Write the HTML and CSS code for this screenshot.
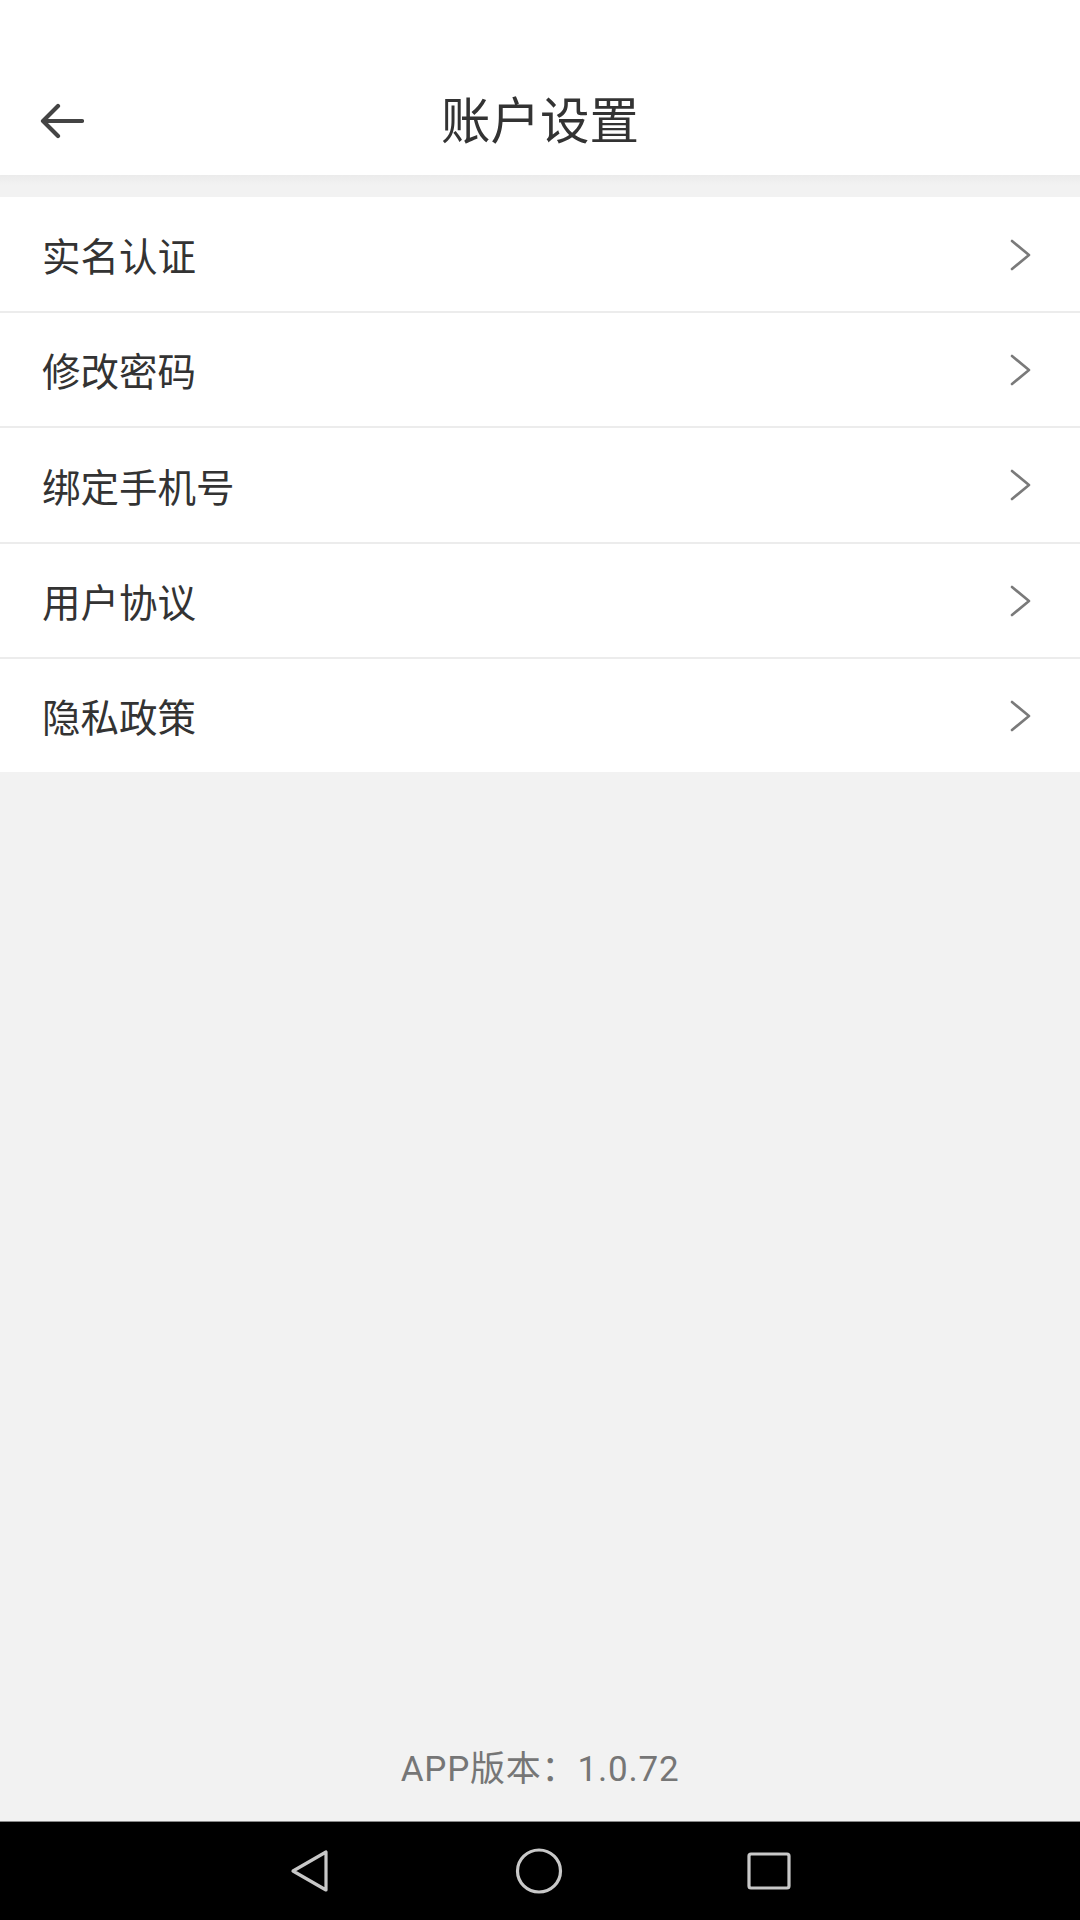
FILE: index.html
```html
<!DOCTYPE html>
<html lang="zh-CN">
<head>
<meta charset="utf-8">
<title>账户设置</title>
<link rel="stylesheet" href="styles.css">
</head>
<body>
<div class="screen">
  <header class="header">
    <div class="status"></div>
    <div class="toolbar">
      <span class="back">
        <svg width="44" height="36" viewBox="0 0 44 36"><path d="M42 18H4M18 3L3 18L18 33" fill="none" stroke="#444" stroke-width="4.2" stroke-linecap="round" stroke-linejoin="round"/></svg>
      </span>
      <h1 class="title">账户设置</h1>
    </div>
  </header>
  <main class="content">
    <ul class="list">
      <li class="row"><span class="label">实名认证</span><svg class="chev" width="22" height="32" viewBox="0 0 22 32"><path d="M2 2L19 16L2 30" fill="none" stroke="#7a7a7a" stroke-width="2.6" stroke-linecap="round" stroke-linejoin="round"/></svg></li>
      <li class="row"><span class="label">修改密码</span><svg class="chev" width="22" height="32" viewBox="0 0 22 32"><path d="M2 2L19 16L2 30" fill="none" stroke="#7a7a7a" stroke-width="2.6" stroke-linecap="round" stroke-linejoin="round"/></svg></li>
      <li class="row"><span class="label">绑定手机号</span><svg class="chev" width="22" height="32" viewBox="0 0 22 32"><path d="M2 2L19 16L2 30" fill="none" stroke="#7a7a7a" stroke-width="2.6" stroke-linecap="round" stroke-linejoin="round"/></svg></li>
      <li class="row"><span class="label">用户协议</span><svg class="chev" width="22" height="32" viewBox="0 0 22 32"><path d="M2 2L19 16L2 30" fill="none" stroke="#7a7a7a" stroke-width="2.6" stroke-linecap="round" stroke-linejoin="round"/></svg></li>
      <li class="row"><span class="label">隐私政策</span><svg class="chev" width="22" height="32" viewBox="0 0 22 32"><path d="M2 2L19 16L2 30" fill="none" stroke="#7a7a7a" stroke-width="2.6" stroke-linecap="round" stroke-linejoin="round"/></svg></li>
    </ul>
    <div class="version">APP版本：1.0.72</div>
  </main>
  <nav class="navbar">
    <svg width="44" height="44" viewBox="0 0 44 44"><path d="M38 3L38 41L5 22Z" fill="none" stroke="#c8c8c8" stroke-width="3.2" stroke-linejoin="round"/></svg>
    <svg width="48" height="48" viewBox="0 0 48 48"><ellipse cx="24" cy="24" rx="21.5" ry="21" fill="none" stroke="#c8c8c8" stroke-width="3.2"/></svg>
    <svg width="46" height="40" viewBox="0 0 46 40"><rect x="3" y="3" width="40" height="34" rx="2" fill="none" stroke="#c8c8c8" stroke-width="3.2"/></svg>
  </nav>
</div>
</body>
</html>
```

FILE: styles.css
```css
* { box-sizing: border-box; margin: 0; padding: 0; }
html, body { width: 1080px; height: 1920px; }
body {
  font-family: "Noto Sans CJK SC", "Noto Sans", Roboto, sans-serif;
  background: #f2f2f2;
  color: #333;
}
.screen {
  width: 1080px;
  height: 1920px;
  display: flex;
  flex-direction: column;
}
.header {
  background: #fff;
  height: 175px;
  display: flex;
  flex-direction: column;
}
.status { height: 66px; }
.toolbar {
  flex: 1;
  display: flex;
  align-items: center;
  justify-content: center;
  position: relative;
  padding-bottom: 2px;
}
.back {
  position: absolute;
  left: 40px;
  top: 37px;
  display: flex;
}
.title {
  font-size: 49.5px;
  font-weight: 400;
  color: #333;
  line-height: 1;
  margin-top: -4px;
}
.content {
  flex: 1;
  display: flex;
  flex-direction: column;
  padding-top: 22px;
  background: linear-gradient(#ebebeb, #f2f2f2 10px);
}
.list { list-style: none; background: #fff; }
.row {
  height: 115.3px;
  display: flex;
  align-items: center;
  justify-content: space-between;
  padding: 0 48px 0 42px;
  border-top: 2px solid #ececec;
}
.row:first-child { border-top: none; height: 114px; }
.label {
  font-size: 38.5px;
  color: #333;
  line-height: 1;
}
.chev { display: block; margin-top: 1px; }
.version {
  margin-top: auto;
  text-align: center;
  font-family: Roboto, "Noto Sans CJK SC", sans-serif;
  font-size: 35px;
  color: #767676;
  padding-bottom: 34px;
  line-height: 1;
  letter-spacing: 0.8px;
}
.navbar {
  height: 99px;
  background: #000;
  border-top: 1px solid #888;
  display: flex;
  align-items: center;
  justify-content: center;
  gap: 183px;
}
```
